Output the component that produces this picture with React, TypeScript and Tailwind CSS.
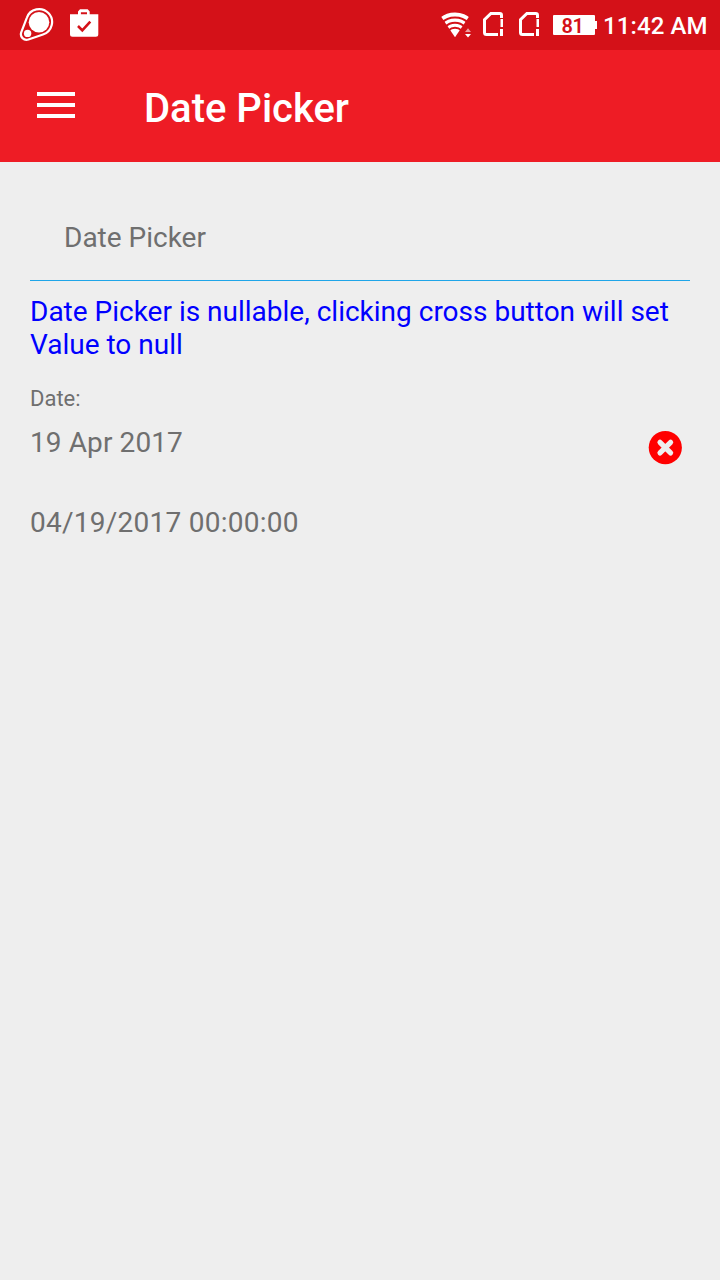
function BallIcon() {
  return (
    <svg className="ml-[18px] size-9 shrink-0" viewBox="0 0 36 36" fill="none">
      <path
        d="M3.300 25.200 8.800 10.800A13 13 0 1 1 25 27.500L10.400 32.500A5.600 5.600 0 0 1 3.300 25.200Z"
        stroke="white"
        strokeWidth="2.200"
      />
      <circle cx="21" cy="15.300" r="10.300" fill="white" />
      <circle cx="9.600" cy="26.400" r="3.700" fill="white" />
    </svg>
  );
}

function CheckedBagIcon() {
  return (
    <svg className="ml-4 h-9 w-[30px] shrink-0" viewBox="0 0 30 36" fill="none">
      <path
        fillRule="evenodd"
        fill="white"
        d="M8 7.300V4.500L10 2.300H17.700L19.700 4.500V7.300H28.300V27.200Q28.300 29.700 25.800 29.700H2.500Q0 29.700 0 27.200V7.300ZM10.900 7.300H17V5.200H10.900Z"
      />
      <path d="m8 19 4.300 4.300 8-8.600" stroke="#d41118" strokeWidth="2.600" />
    </svg>
  );
}

function WifiIcon() {
  return (
    <svg className="h-7 w-8 shrink-0" viewBox="0 0 32 28" fill="none">
      <defs>
        <clipPath id="wifi-fan">
          <path d="M15 26.200-1.500 1.900V0H31.500V1.900Z" />
        </clipPath>
      </defs>
      <g clipPath="url(#wifi-fan)" stroke="white">
        <circle cx="15" cy="25.700" r="22.200" strokeWidth="3.800" />
        <circle cx="15" cy="25.700" r="16.500" strokeWidth="3.200" />
        <circle cx="15" cy="25.700" r="11.500" strokeWidth="3" />
        <circle cx="15" cy="25.700" r="8" fill="white" stroke="none" />
      </g>
      <path d="M25 21h6L28 17.200Z" fill="#ee9da0" />
      <path d="M25 22.900h6L28 26.500Z" fill="white" />
    </svg>
  );
}

function SimIcon() {
  return (
    <svg className="h-[26px] w-[22px] shrink-0" viewBox="0 0 22 26" fill="none">
      <path
        d="M15 23.500H3.500Q1.500 23.500 1.500 21.500V8.600L7.900 2.500H16.800Q18.500 2.500 18.500 4.300V7"
        stroke="white"
        strokeWidth="3"
      />
      <path d="M17.500 8H20v8h-2.500zM17 18h3v7h-3z" fill="white" />
    </svg>
  );
}

function StatusBar() {
  return (
    <div className="flex h-[50px] items-center bg-[#d41118] text-white">
      <BallIcon />
      <CheckedBagIcon />
      <div className="ml-auto flex items-center">
        <WifiIcon />
        <div className="ml-[11px] flex gap-[14px] pb-[2px]">
          <SimIcon />
          <SimIcon />
        </div>
        <div className="ml-3 flex items-center">
          <div className="flex h-5 w-[42px] items-center justify-center rounded-[1px] bg-white pt-px pr-[3px] text-[20px] leading-5 font-semibold tracking-[-0.5px] text-[#d41118]">
            81
          </div>
          <div className="h-2 w-[2px] bg-white" />
        </div>
        <div className="ml-[6px] w-[117px] pt-[2px] text-[24px] leading-7 font-medium tracking-[0.1px] whitespace-nowrap">
          11:42 AM
        </div>
      </div>
    </div>
  );
}

function AppBar() {
  return (
    <header className="flex h-28 bg-[#ee1c25] text-white">
      <button className="mt-[42px] ml-[37px] flex h-[26px] w-[38px] flex-col justify-between" aria-label="Menu">
        <span className="h-1 w-full bg-white" />
        <span className="h-1 w-full bg-white" />
        <span className="h-1 w-full bg-white" />
      </button>
      <h1 className="mt-[35px] ml-[69px] text-[40px] leading-[47px] font-medium">Date Picker</h1>
    </header>
  );
}

function ClearIcon() {
  return (
    <svg className="h-[35px] w-[34px]" viewBox="0 0 34 35">
      <circle cx="17.300" cy="17.600" r="16.600" fill="#ff0000" />
      <path
        d="m12 12.300 10.600 10.600M22.600 12.300 12 22.900"
        stroke="#eeeeee"
        strokeWidth="5.200"
        strokeLinecap="round"
      />
    </svg>
  );
}

export default function App() {
  return (
    <div className="flex min-h-screen flex-col bg-[#eeeeee] font-['Roboto',sans-serif] text-[28px] leading-[33px] text-[#6f6f6f]">
      <StatusBar />
      <AppBar />
      <main className="px-[30px] pt-[59px]">
        <h2 className="border-b border-[#1fa5e8] pb-[26px] pl-[34px]">Date Picker</h2>
        <p className="mt-[14px] text-[#0000ff]">Date Picker is nullable, clicking cross button will set Value to null</p>
        <div className="mt-[25px] text-[22px] leading-[26px]">Date:</div>
        <div className="mt-[14px] flex h-[38px] items-start justify-between pr-2">
          <span className="tracking-[0.1px]">19 Apr 2017</span>
          <button className="mt-1" aria-label="Clear date">
            <ClearIcon />
          </button>
        </div>
        <div className="mt-[42px] tracking-[0.25px]">04/19/2017 00:00:00</div>
      </main>
    </div>
  );
}
